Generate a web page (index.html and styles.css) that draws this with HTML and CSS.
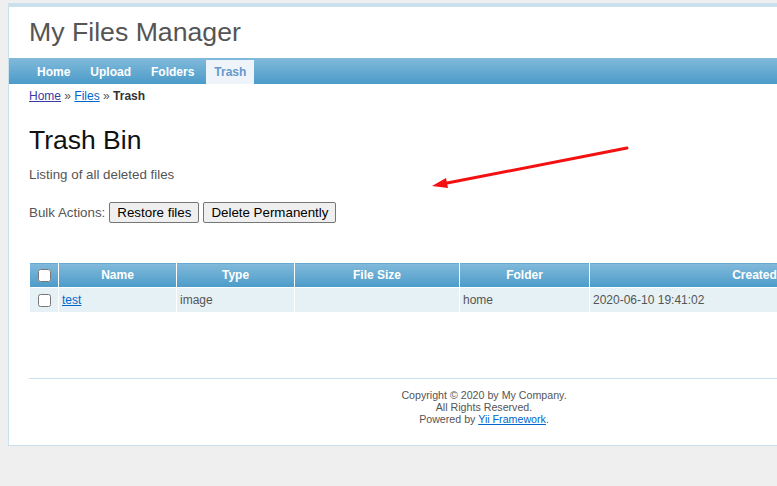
FILE: index.html
```html
<!DOCTYPE html>
<html>
<head>
<meta charset="utf-8">
<title>My Files Manager - Trash</title>
<link rel="stylesheet" href="styles.css">
</head>
<body>
<div class="page">
  <div class="header"><div class="logo">My Files Manager</div></div>
  <nav class="mainmenu">
    <a href="#">Home</a>
    <a href="#">Upload</a>
    <a href="#">Folders</a>
    <a href="#" class="active">Trash</a>
  </nav>
  <div class="breadcrumbs"><a href="#" class="visited">Home</a> &raquo; <a href="#">Files</a> &raquo; <span class="current">Trash</span></div>
  <div class="content">
    <h1>Trash Bin</h1>
    <p class="lead">Listing of all deleted files</p>
    <div class="bulk">Bulk Actions: <button>Restore files</button> <button>Delete Permanently</button></div>
    <table class="items">
      <colgroup>
        <col class="c-check"><col class="c-name"><col class="c-type"><col class="c-size"><col class="c-folder"><col class="c-created">
      </colgroup>
      <thead>
        <tr><th><input type="checkbox"></th><th>Name</th><th>Type</th><th>File Size</th><th>Folder</th><th>Created</th></tr>
      </thead>
      <tbody>
        <tr><td class="chk"><input type="checkbox"></td><td><a href="#">test</a></td><td>image</td><td></td><td>home</td><td>2020-06-10 19:41:02</td></tr>
      </tbody>
    </table>
  </div>
  <div class="footer">
    Copyright &copy; 2020 by My Company.<br>
    All Rights Reserved.<br>
    Powered by <a href="#">Yii Framework</a>.
  </div>
</div>
<svg class="arrow" width="777" height="486" viewBox="0 0 777 486">
  <line x1="627" y1="148" x2="442" y2="184" stroke="#f21010" stroke-width="3" stroke-linecap="round"/>
  <polygon points="432,186 446,178 448,188" fill="#f21010"/>
</svg>
</body>
</html>
```
FILE: styles.css
```css
html, body {
  margin: 0;
  padding: 0;
}
body {
  background: #efefef;
  color: #555;
  font: normal 13.33px "Liberation Sans", Arial, sans-serif;
  position: relative;
  height: 486px;
  overflow: hidden;
}
.page {
  margin: 3px 0 0 8px;
  width: 950px;
  background: #fff;
  border: 1px solid #c9e0ed;
  border-top-width: 4px;
}
.header {
  height: 51px;
}
.logo {
  padding: 9px 20px 0;
  font-size: 26.67px;
  line-height: 32px;
  color: #555;
}
.mainmenu {
  height: 26px;
  display: flex;
  gap: 4px;
  padding: 0 20px;
  background: linear-gradient(#82badb, #4b9bc9);
  align-items: flex-end;
}
.mainmenu a {
  display: block;
  color: #fff;
  text-decoration: none;
  font-weight: bold;
  font-size: 12px;
  line-height: 14px;
  padding: 5px 8px;
}
.mainmenu a.active {
  color: #6399cd;
  background: #eff4fa;
}
.breadcrumbs {
  font-size: 12px;
  line-height: 14px;
  padding: 5px 20px;
}
.breadcrumbs a {
  color: #0066cc;
}
.breadcrumbs a.visited {
  color: #3a3aa8;
}
.breadcrumbs .current {
  color: #333;
  font-weight: bold;
}
.content {
  padding: 0 20px;
}
h1 {
  margin: 14px 0 0;
  font-size: 26.5px;
  line-height: 36px;
  font-weight: normal;
  color: #111;
}
.lead {
  margin: 9px 0 0;
  line-height: 16px;
}
.bulk {
  margin-top: 18px;
  display: flex;
  align-items: center;
  gap: 4px;
  height: 22px;
}
.bulk button {
  font: 13.33px "Liberation Sans", Arial, sans-serif;
  color: #000;
  background: #efefef;
  border: 1px solid #767676;
  border-radius: 2px;
  height: 21px;
  padding: 0 7px;
}
table.items {
  margin-top: 39px;
  border-collapse: collapse;
  width: 891px;
  table-layout: fixed;
  font-size: 12px;
}
col.c-check { width: 29px; }
col.c-name { width: 118px; }
col.c-type { width: 118px; }
col.c-size { width: 165px; }
col.c-folder { width: 130px; }
table.items th, table.items td {
  border: 1px solid #fff;
  height: 24px;
  padding: 0 3px;
}
table.items th {
  color: #fff;
  font-weight: bold;
  text-align: center;
  background: linear-gradient(#82badb, #4b9bc9);
}
table.items td {
  background: #e5f1f4;
  color: #555;
  text-align: left;
}
table.items td.chk, table.items th:first-child {
  text-align: center;
}
table.items input {
  margin: 0;
  width: 13px;
  height: 13px;
  vertical-align: middle;
}
table.items td a {
  color: #0066cc;
}
.footer {
  margin: 65px 20px 10px;
  padding: 10px;
  border-top: 1px solid #c9e0ed;
  text-align: center;
  font-size: 10.67px;
  line-height: 12px;
}
.footer a {
  color: #0066cc;
}
.arrow {
  position: absolute;
  left: 0;
  top: 0;
  pointer-events: none;
}
```
